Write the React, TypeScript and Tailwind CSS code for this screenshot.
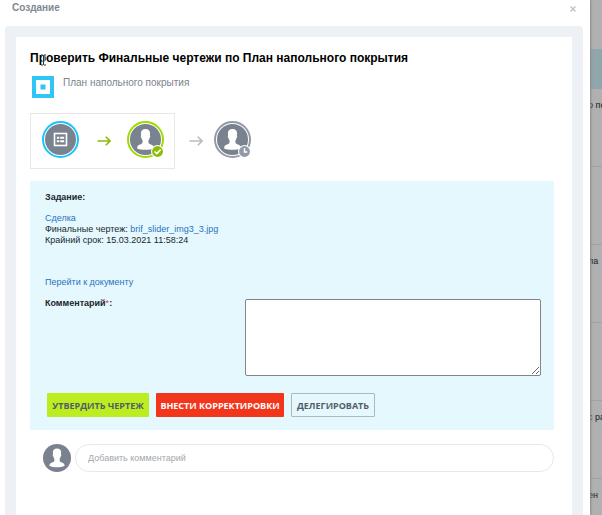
import { useState } from "react";

const FONT = "font-['Liberation_Sans',Arial,sans-serif]";

const PersonIcon = ({ className }: { className: string }) => (
  <svg viewBox="0 0 36 36" className={className} aria-hidden="true">
    <circle cx="18" cy="18" r="18" fill="#79828e" />
    <path
      fill="#fff"
      d="M18 5.800C14.500 5.800 12.600 7.800 12.700 10.600L12.900 13.400C12.200 13.800 12.400 15.800 13.300 16.200C13.600 17.600 14 18.500 14.600 19.200V21.600C14.600 22.700 13.500 23.200 11.800 23.800C9.600 24.600 8.600 25.400 8.400 27L8.300 28.400C11 29.600 14.400 30 18 30S25 29.600 27.700 28.400L27.600 27C27.400 25.400 26.400 24.600 24.200 23.800C22.500 23.200 21.400 22.700 21.400 21.600V19.200C22 18.500 22.400 17.600 22.700 16.200C23.600 15.800 23.800 13.800 23.100 13.400L23.300 10.600C23.400 7.800 21.500 5.800 18 5.800Z"
    />
  </svg>
);

const FormIcon = () => (
  <svg viewBox="0 0 31 31" className="size-[31px]" aria-hidden="true">
    <circle cx="15.500" cy="15.500" r="15.500" fill="#79828e" />
    <rect x="9.500" y="9.500" width="12" height="12" fill="none" stroke="#fff" strokeWidth="1.600" />
    <path d="M11.800 13.800h2.500M11.800 17.200h2.500M15.200 13.800h4M15.200 17.200h4" stroke="#fff" strokeWidth="2" />
  </svg>
);

const Arrow = ({ className }: { className: string }) => (
  <svg viewBox="0 0 14 10" className={className} fill="none" stroke="currentColor" strokeWidth="1.600" aria-hidden="true">
    <path d="M0.500 5h12.500M8.800 0.800 13 5 8.800 9.200" />
  </svg>
);

const CheckBadge = () => (
  <svg viewBox="0 0 12 12" className="absolute -right-[2px] -bottom-[2px] size-[13px]" aria-hidden="true">
    <circle cx="6" cy="6" r="6" fill="#fff" />
    <circle cx="6" cy="6" r="5" fill="#8ebc06" />
    <path d="M3.300 6 5.300 7.900 8.900 4.300" fill="none" stroke="#fff" strokeWidth="1.500" />
  </svg>
);

const ClockBadge = () => (
  <svg viewBox="0 0 12 12" className="absolute -right-[2px] -bottom-[2px] size-[13px]" aria-hidden="true">
    <circle cx="6" cy="6" r="6" fill="#fff" />
    <circle cx="6" cy="6" r="5" fill="#929aa6" />
    <path d="M6 3v3.400h2.600" fill="none" stroke="#fff" strokeWidth="1.300" />
  </svg>
);

const listRows = ["о пе", "", "ла", "", "с ра"];

const App = () => {
  const [comment, setComment] = useState("");
  const [reply, setReply] = useState("");

  return (
    <div className={`flex h-screen overflow-hidden bg-[#b0b0b0] text-[#20262c] ${FONT}`}>
      {/* Slider */}
      <main className="relative z-10 flex min-w-0 flex-1 flex-col bg-white pr-[7px] pl-[5px] shadow-[1px_0_2px_#8a8a8a]">
        <header className="flex h-[26px] shrink-0 items-start justify-between pr-[7px] pl-[7px]">
          <h2 className="pt-px text-[10px] leading-[14px] font-bold text-[#7f8892]">Создание</h2>
          <button type="button" aria-label="Закрыть" className="pt-[6px] text-[#c4c4c4]">
            <svg viewBox="0 0 6 6" className="size-[6px]" stroke="currentColor" strokeWidth="1.500">
              <path d="M.5.5l5 5M5.500.5l-5 5" />
            </svg>
          </button>
        </header>

        <div className="flex flex-1 flex-col rounded-t-sm bg-[#edf1f5] px-[11px] pt-[11px]">
          <section className="flex-1 bg-white pt-[13px] pr-[18px] pl-[14px]">
            <div className="relative">
              <h1 className="text-[12px] leading-4 font-bold whitespace-nowrap text-black">
                Проверить Финальные чертежи по План напольного покрытия
              </h1>
              {/* Text cursor */}
              <svg viewBox="0 0 7 12" className="absolute top-1 left-[10px] h-3 w-[7px]" fill="none" aria-hidden="true">
                <path d="M3.500 1.500v9" stroke="#fff" strokeWidth="2" />
                <path d="M1 1h2l.5.5.5-.5h2M1 11h2l.5-.5.500.5h2M3.500 1.500v9" stroke="#333" strokeWidth="1" />
              </svg>
            </div>

            <div className="mt-[10px] flex items-start gap-[9px] pl-[2px]">
              <svg viewBox="0 0 22 22" className="size-[22px]" aria-hidden="true">
                <rect x="2" y="2" width="18" height="18" fill="#fff" stroke="#2fc6f6" strokeWidth="4" />
                <rect x="8.500" y="8.500" width="5" height="5" fill="#2fc6f6" />
              </svg>
              <p className="text-[10px] leading-[14px] text-[#7b838c]">План напольного покрытия</p>
            </div>

            {/* Workflow steps */}
            <div className="mt-[15px] flex h-14 items-center">
              <div className="flex h-14 w-[145px] items-start border border-[#e8e8e8] pt-[7px] pl-[11px]">
                <div className="flex size-[37px] items-center justify-center rounded-full border-2 border-[#1cc3fb]">
                  <FormIcon />
                </div>
                <Arrow className="mr-4 ml-[18px] mt-[15px] h-[10px] w-[14px] text-[#8ebc06]" />
                <div className="relative flex size-[37px] items-center justify-center rounded-full border-2 border-[#9ddb02]">
                  <PersonIcon className="size-[31px]" />
                  <CheckBadge />
                </div>
              </div>
              <div className="flex h-14 items-start pt-2">
                <Arrow className="mr-[11px] ml-[14px] mt-[15px] h-[10px] w-[14px] text-[#b9bcc2]" />
                <div className="relative flex size-[37px] items-center justify-center rounded-full border-2 border-[#929aa6]">
                  <PersonIcon className="size-[31px]" />
                  <ClockBadge />
                </div>
              </div>
            </div>

            {/* Task */}
            <form
              className="mt-3 bg-[#e5f8fe] pt-[11px] pr-[13px] pb-[13px] pl-[15px] text-[9px] leading-[11px]"
              onSubmit={(e) => e.preventDefault()}
            >
              <h3 className="font-bold">Задание:</h3>
              <div className="mt-[10px]">
                <a href="#deal" className="text-[#2a72be]">Сделка</a>
                <p>
                  Финальные чертеж: <a href="#file" className="text-[#2a72be]">brif_slider_img3_3.jpg</a>
                </p>
                <p>Крайний срок: 15.03.2021 11:58:24</p>
              </div>
              <a href="#document" className="mt-[31px] block text-[#2a72be]">Перейти к документу</a>

              <div className="mt-[11px] flex items-start">
                <label htmlFor="comment" className="w-[200px] shrink-0 font-bold leading-[9px]">
                  Комментарий<span className="font-normal text-red-500">*</span>:
                </label>
                <textarea
                  id="comment"
                  value={comment}
                  onChange={(e) => setComment(e.target.value)}
                  className="block h-[77px] min-w-0 flex-1 rounded-[2px] border border-[#858585] bg-white p-1"
                />
              </div>

              <div className="mt-[17px] flex gap-[7px] pl-[2px] font-['Open_Sans',sans-serif] font-bold whitespace-nowrap">
                <button type="submit" className="h-6 w-[102px] rounded-[1px] bg-[#bbed21] text-[#535c69]">
                  УТВЕРДИТЬ ЧЕРТЕЖ
                </button>
                <button type="button" className="h-6 w-32 rounded-[1px] bg-[#f1361b] text-white">
                  ВНЕСТИ КОРРЕКТИРОВКИ
                </button>
                <button type="button" className="h-6 w-[84px] rounded-[1px] border border-[#adb8bf] text-[#535c69]">
                  ДЕЛЕГИРОВАТЬ
                </button>
              </div>
            </form>

            <div className="mt-[14px] flex items-center gap-1 pl-[13px]">
              <PersonIcon className="size-7 shrink-0" />
              <input
                type="text"
                aria-label="Добавить комментарий"
                placeholder="Добавить комментарий"
                value={reply}
                onChange={(e) => setReply(e.target.value)}
                className="h-7 min-w-0 flex-1 rounded-full border border-[#e6e8ea] px-3 text-[9px] placeholder:text-[#a3a8ae]"
              />
            </div>
          </section>
        </div>
      </main>

      {/* Dimmed list behind the slider */}
      <aside className="-ml-[2px] w-[14px] shrink-0 overflow-hidden text-[9px] leading-3 whitespace-nowrap text-[#222]">
        <div className="h-[49px]" />
        <div className="h-10 bg-[#91a5ac]" />
        {listRows.map((text, i) => (
          <div key={i} className="h-[78px] border-b border-[#a2a2a2] pt-[10px]">
            {text}
          </div>
        ))}
        <div className="pt-[10px]">ен</div>
      </aside>
    </div>
  );
};

export default App;
